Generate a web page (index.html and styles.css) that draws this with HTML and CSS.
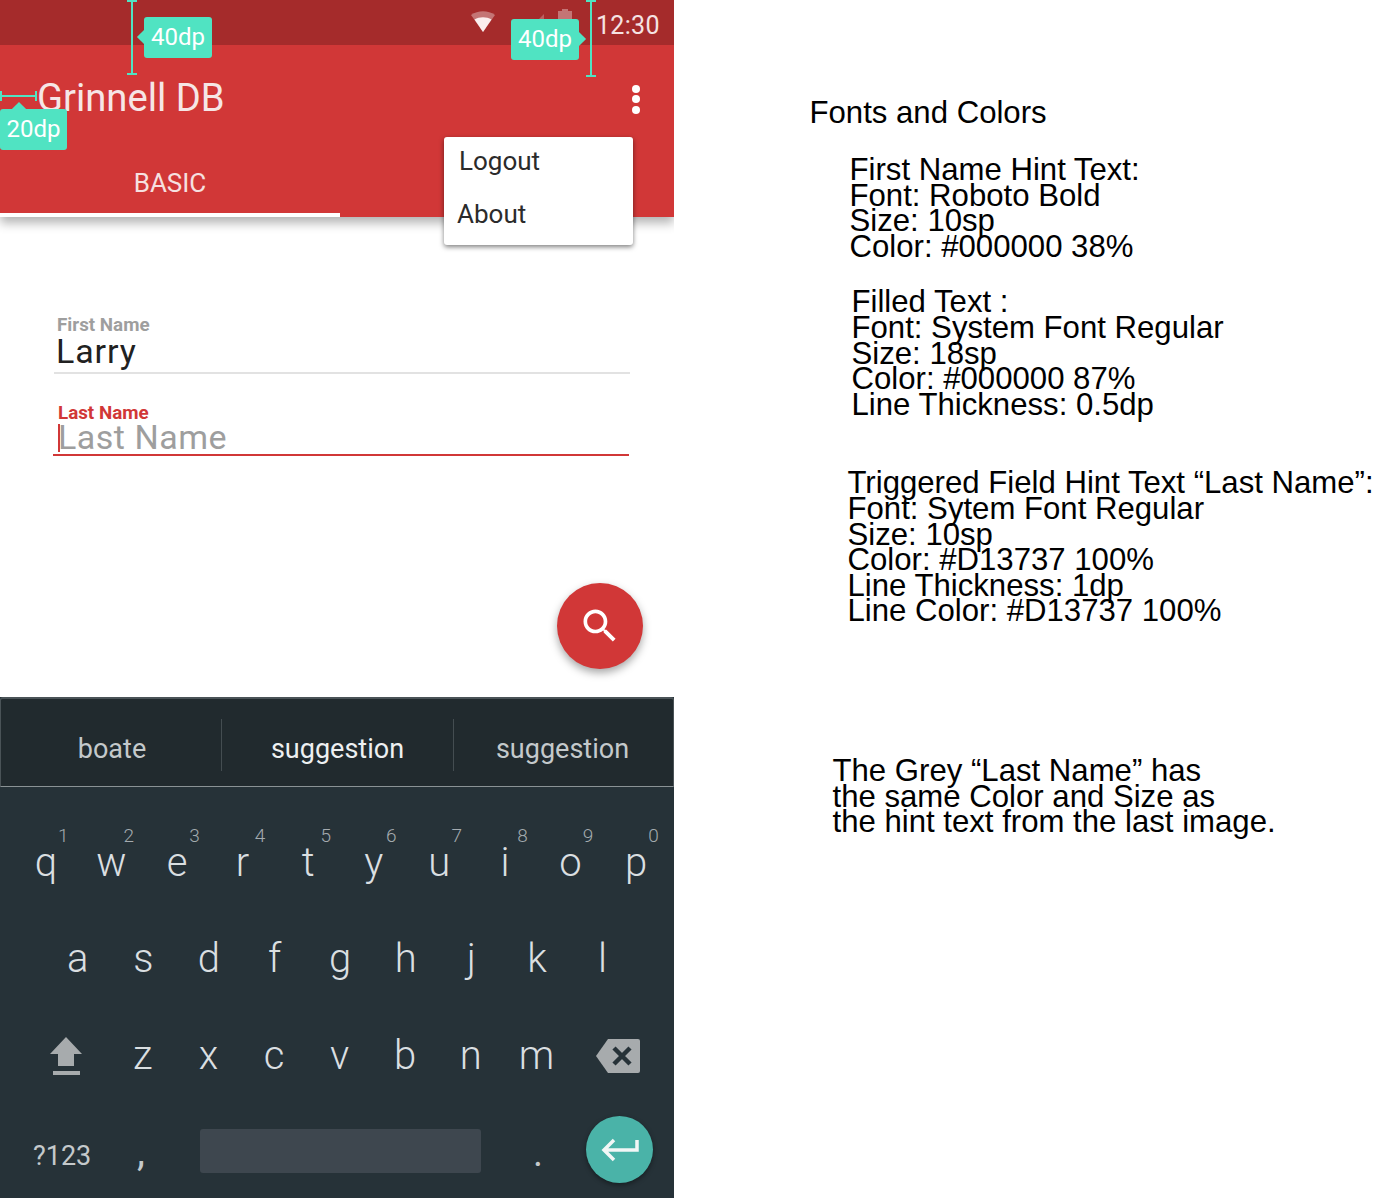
FILE: index.html
```html
<!DOCTYPE html>
<html lang="en">
<head>
  <meta charset="UTF-8">
  <meta name="viewport" content="width=device-width, initial-scale=1.0">
  <title>Grinnell DB spec</title>
  <link rel="stylesheet" href="styles.css">
</head>
<body>
  <div class="page">
    <div class="phone">
      <header class="appbar">
        <div class="statusbar">
          <svg class="wifi" width="26" height="24" viewBox="0 0 26 24"><path d="M1 5C8 0 18 0 25 5L13 22Z" fill="#fff" fill-opacity=".35"/><path d="M4.500 9.500C9.500 6.500 16.500 6.500 21.500 9.500L13 22Z" fill="#fbeeee"/></svg>
          <svg class="signal" width="20" height="20" viewBox="0 0 20 20"><path d="M18 2V18H2Z" fill="#fff" fill-opacity=".25"/></svg>
          <svg class="battery" width="16" height="26" viewBox="0 0 16 26"><path d="M5 0H11V2H15V26H1V2H5Z" fill="#fff" fill-opacity=".35"/></svg>
          <span class="clock">12:30</span>
        </div>
        <div class="toolbar">
          <h1 class="app-title">Grinnell DB</h1>
          <div class="overflow"><i></i><i></i><i></i></div>
        </div>
        <div class="tabs"><div class="tab">BASIC</div></div>
      </header>

      <div class="menu">
        <div class="menu-item logout">Logout</div>
        <div class="menu-item about">About</div>
      </div>

      <main class="form">
        <div class="field first">
          <label class="field-label">First Name</label>
          <div class="field-value">Larry</div>
        </div>
        <div class="field last">
          <label class="field-label">Last Name</label>
          <div class="field-value"><span class="caret"></span>Last Name</div>
        </div>
      </main>

      <div class="fab">
        <svg width="44" height="44" viewBox="0 0 24 24"><path fill="#fff" d="M15.500 14h-.79l-.28-.27C15.410 12.590 16 11.110 16 9.500 16 5.910 13.090 3 9.500 3S3 5.910 3 9.500 5.910 16 9.500 16c1.610 0 3.090-.59 4.230-1.570l.27.28v.79l5 4.990L20.490 19l-4.990-5zm-6 0C7.010 14 5 11.990 5 9.500S7.010 5 9.500 5 14 7.010 14 9.500 11.990 14 9.500 14z"/></svg>
      </div>

      <section class="keyboard">
        <div class="suggestions">
          <div class="sug s1">boate</div>
          <div class="sug s2">suggestion</div>
          <div class="sug s3">suggestion</div>
        </div>
        <div class="keys">
          <div class="row row1">
            <div class="key">q<sup>1</sup></div>
            <div class="key">w<sup>2</sup></div>
            <div class="key">e<sup>3</sup></div>
            <div class="key">r<sup>4</sup></div>
            <div class="key">t<sup>5</sup></div>
            <div class="key">y<sup>6</sup></div>
            <div class="key">u<sup>7</sup></div>
            <div class="key">i<sup>8</sup></div>
            <div class="key">o<sup>9</sup></div>
            <div class="key">p<sup>0</sup></div>
          </div>
          <div class="row row2">
            <div class="key">a</div>
            <div class="key">s</div>
            <div class="key">d</div>
            <div class="key">f</div>
            <div class="key">g</div>
            <div class="key">h</div>
            <div class="key">j</div>
            <div class="key">k</div>
            <div class="key">l</div>
          </div>
          <div class="row row3">
            <div class="key wide shift">
              <svg width="34" height="40" viewBox="0 0 34 40"><path fill="#a7abad" d="M17 1L33 18H25V30H9V18H1Z"/><rect fill="#a7abad" x="4" y="35" width="27" height="4"/></svg>
            </div>
            <div class="key">z</div>
            <div class="key">x</div>
            <div class="key">c</div>
            <div class="key">v</div>
            <div class="key">b</div>
            <div class="key">n</div>
            <div class="key">m</div>
            <div class="key wide">
              <svg width="46" height="36" viewBox="0 0 46 36"><path fill="#a7abad" d="M13 1H43Q45 1 45 3V33Q45 35 43 35H13L1 18Z"/><path d="M19 10L35 26M35 10L19 26" stroke="#263238" stroke-width="4.500"/></svg>
            </div>
          </div>
          <div class="row row4">
            <div class="sym">?123</div>
            <div class="comma">,</div>
            <div class="space"></div>
            <div class="dot">.</div>
            <div class="enter">
              <svg width="38" height="26" viewBox="0 0 38 26"><path d="M36 3V13H4M13 3L3 13L13 23" fill="none" stroke="#f2f7f6" stroke-width="3.500"/></svg>
            </div>
          </div>
        </div>
      </section>

      <!-- redline annotations -->
      <div class="vline v1"></div>
      <div class="vline v2"></div>
      <div class="hline"></div>
      <div class="tag tag-left">40dp</div>
      <div class="tag tag-right">40dp</div>
      <div class="tag tag-up">20dp</div>
    </div>

    <aside class="notes">
      <h2 class="notes-title">Fonts and Colors</h2>
      <p class="note n1">First Name Hint Text:<br>Font: Roboto Bold<br>Size: 10sp<br>Color: #000000 38%</p>
      <p class="note n2">Filled Text :<br>Font: System Font Regular<br>Size: 18sp<br>Color: #000000 87%<br>Line Thickness: 0.5dp</p>
      <p class="note n3">Triggered Field Hint Text “Last Name”:<br>Font: Sytem Font Regular<br>Size: 10sp<br>Color: #D13737 100%<br>Line Thickness: 1dp<br>Line Color: #D13737 100%</p>
      <p class="note n4">The Grey “Last Name” has<br>the same Color and Size as<br>the hint text from the last image.</p>
    </aside>
  </div>
</body>
</html>
```
FILE: styles.css
```css
html, body { margin: 0; padding: 0; background: #fff; }
.page { display: flex; width: 1389px; height: 1198px; overflow: hidden; font-family: "Roboto", sans-serif; }

/* phone */
.phone { position: relative; width: 674px; height: 1198px; flex: none; overflow: hidden; background: #fff; }
.appbar { background: #d13737; height: 217px; box-shadow: 0 6px 10px rgba(0,0,0,.3); display: flex; flex-direction: column; }
.statusbar { height: 45px; flex: none; background: #a52b2b; display: flex; align-items: flex-start; color: #f5e3e3; }
.wifi { margin: 10px 0 0 470px; }
.signal { margin: 12px 0 0 30px; }
.battery { margin: 9px 0 0 11px; }
.clock { margin-left: 23px; font-size: 25px; line-height: 52px; letter-spacing: .3px; }
.toolbar { height: 105px; flex: none; display: flex; align-items: center; justify-content: space-between; padding: 0 34px 0 37px; }
.app-title { margin: 0; font-size: 38.200px; font-weight: 400; color: #f6e6e6; }
.overflow { display: flex; flex-direction: column; gap: 2.500px; margin-top: 3px; }
.overflow i { display: block; width: 8px; height: 8px; border-radius: 50%; background: #fff; }
.tabs { height: 67px; flex: none; }
.tab { width: 340px; height: 67px; box-sizing: border-box; border-bottom: 4px solid #fff; text-align: center; font-size: 26px; line-height: 66px; color: #f6e0e0; }

.menu { position: absolute; left: 444px; top: 137px; width: 189px; height: 108px; background: #fff; border-radius: 3px; box-shadow: 0 2px 5px rgba(0,0,0,.5); font-size: 26px; color: #2b2b2b; }
.menu-item { height: 52px; line-height: 50px; }
.logout { padding-left: 15px; line-height: 48px; }
.about { padding-left: 13px; }

/* form */
.form { height: 480px; padding-top: 99px; box-sizing: border-box; }
.field { width: 576px; box-sizing: border-box; }
.first { margin-left: 54px; height: 58px; border-bottom: 2px solid #e2e2e2; padding-left: 3px; }
.last { margin: 30px 0 0 53px; height: 52px; border-bottom: 2px solid #d13737; padding-left: 5px; }
.field-label { display: block; font-size: 18.800px; font-weight: 700; line-height: 18px; color: #9e9e9e; }
.last .field-label { color: #d13737; margin-top: 1px; }
.field-value { font-size: 34px; line-height: 34px; color: #212121; letter-spacing: .9px; }
.first .field-value { margin-left: -1px; }
.last .field-value { color: #9e9e9e; position: relative; letter-spacing: .5px; margin-top: -2px; }
.caret { position: absolute; left: 0; top: 4px; width: 2px; height: 28px; background: #d13737; }

.fab { position: absolute; left: 557px; top: 583px; width: 86px; height: 86px; border-radius: 50%; background: #d13737; box-shadow: 0 4px 8px rgba(0,0,0,.35); display: flex; align-items: center; justify-content: center; }

/* keyboard */
.keyboard { background: #263238; height: 501px; color: #dadfe1; }
.suggestions { height: 90px; box-sizing: border-box; background: #212a2e; border: 2px solid #4a5357; border-bottom: 1px solid #8a9295; border-width: 2px 1px 1px; border-radius: 3px 3px 0 0; display: flex; align-items: flex-start; padding-top: 20px; font-size: 27px; }
.sug { height: 52px; line-height: 60px; text-align: center; box-sizing: border-box; color: #c4c9cb; }
.s1 { width: 221px; border-right: 1px solid #444d51; padding-left: 2px; }
.s2 { width: 232px; border-right: 1px solid #444d51; color: #eef0f1; }
.s3 { flex: 1; padding-right: 0; margin-left: -2px; }
.row { display: flex; height: 98px; font-size: 40px; font-weight: 300; }
.key { width: 65.600px; flex: none; text-align: center; position: relative; line-height: 98px; }
.key svg { vertical-align: middle; margin-top: -4px; }
.row1 { height: 96px; padding: 27px 0 0 13px; }
.row2 { height: 97px; padding-left: 45px; }
.row3 { padding-left: 13px; }
.wide { width: 97px; box-sizing: border-box; }
.shift { padding-left: 9px; }
.key sup { position: absolute; left: 45px; top: 11px; font-size: 19px; line-height: 22px; color: #a4abaf; }
.row4 { position: relative; font-size: 27px; align-items: flex-start; }
.sym { margin: 33px 0 0 33px; width: 79px; line-height: 36px; color: #c4c9cb; font-weight: 400; }
.comma { width: 88px; margin-top: 27px; line-height: 40px; font-size: 40px; font-weight: 400; padding-left: 25px; box-sizing: border-box; color: #c4c9cb; }
.space { width: 281px; height: 44px; margin-top: 24px; background: #3e474f; border-radius: 3px; }
.dot { width: 105px; margin-top: 28px; line-height: 40px; font-size: 38px; font-weight: 400; padding-left: 52px; box-sizing: border-box; color: #c4c9cb; }
.enter { position: absolute; left: 586px; top: 11px; width: 67px; height: 67px; border-radius: 50%; background: #4ab3a8; box-shadow: 0 2px 5px rgba(0,0,0,.4); display: flex; align-items: center; justify-content: center; }

/* redlines */
.vline { position: absolute; width: 2px; background: #50e3c2; }
.vline::after, .vline::before, .hline::after, .hline::before { content: ""; position: absolute; background: #50e3c2; }
.vline::before, .vline::after { left: -4px; width: 10px; height: 2px; }
.vline::before { top: 0; }
.vline::after { bottom: 0; }
.v1 { left: 131px; top: 0; height: 75px; }
.v2 { left: 590px; top: 0; height: 77px; }
.hline { position: absolute; left: 0; top: 95px; width: 37px; height: 2px; background: #50e3c2; }
.hline::before, .hline::after { top: -4px; width: 2px; height: 10px; }
.hline::before { left: 0; }
.hline::after { right: 0; }
.tag { position: absolute; width: 68px; height: 41px; background: #50e3c2; border-radius: 3px; color: #fff; font-size: 24px; line-height: 40px; text-align: center; }
.tag::before { content: ""; position: absolute; width: 10px; height: 10px; background: #50e3c2; transform: rotate(45deg); }
.tag-left { left: 144px; top: 17px; }
.tag-left::before { left: -5px; top: 15px; }
.tag-right { left: 511px; top: 19px; }
.tag-right::before { right: -5px; top: 15px; }
.tag-up { left: 0; top: 109px; width: 67px; }
.tag-up::before { left: 14px; top: -5px; }

/* notes */
.notes { flex: 1; padding-top: 100px; font-family: "Liberation Sans", Arial, sans-serif; color: #000; font-size: 31.150px; line-height: 25.600px; }
.notes-title { margin: 0 0 31px 135.500px; font-size: 31.150px; font-weight: 400; line-height: 26px; }
.note { margin: 0; white-space: nowrap; }
.n1 { margin-left: 175.500px; }
.n2 { margin: 30px 0 0 177.500px; }
.n3 { margin: 53px 0 0 173.500px; }
.n4 { margin: 134px 0 0 158.500px; }
```
